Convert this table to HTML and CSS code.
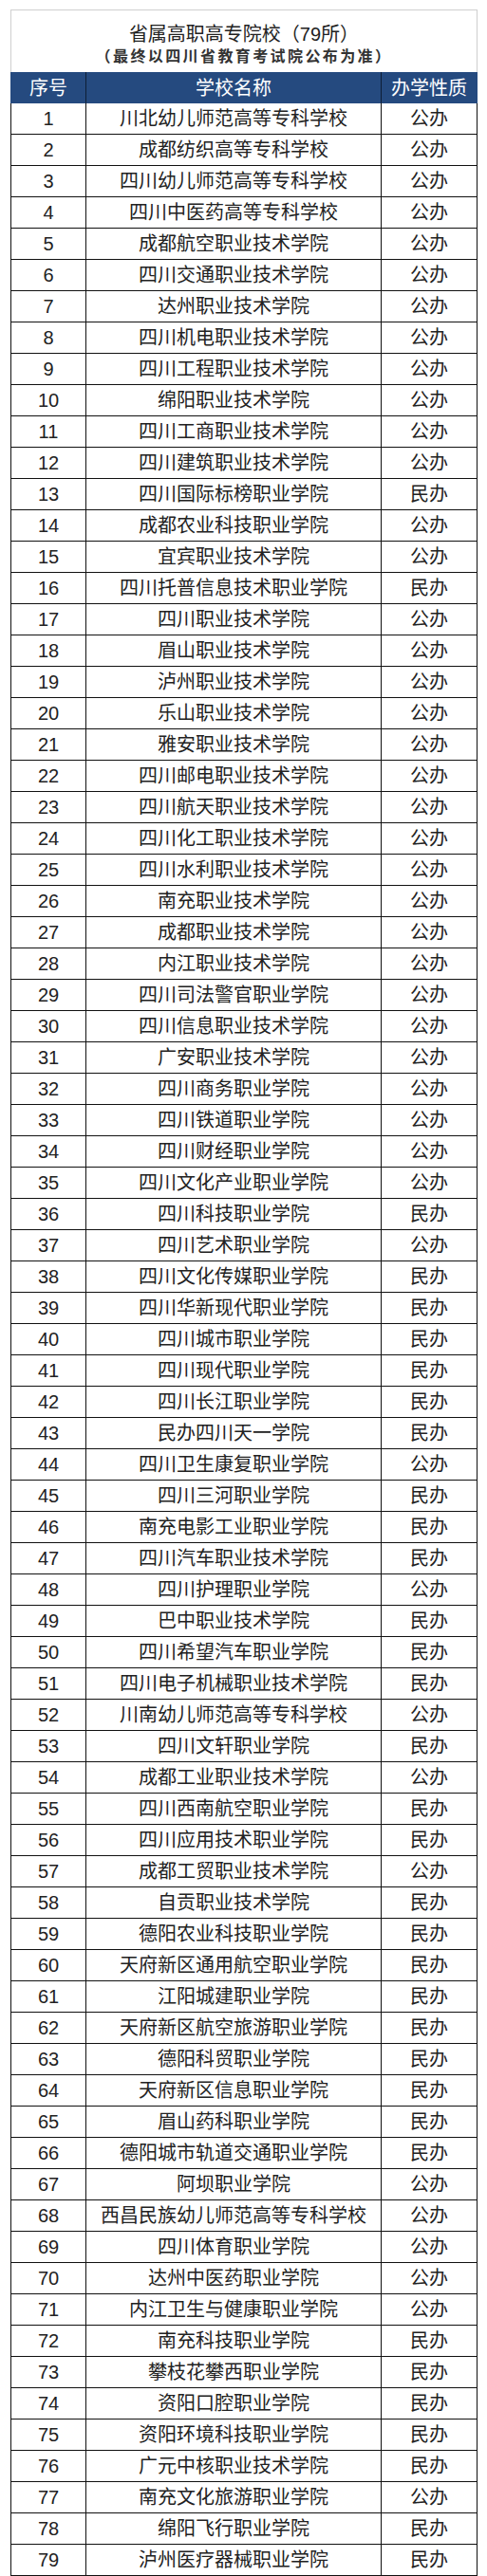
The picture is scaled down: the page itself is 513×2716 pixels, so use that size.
FILE: index.html
```html
<!DOCTYPE html>
<html lang="zh-CN">
<head>
<meta charset="utf-8">
<title>省属高职高专院校（79所）</title>
<link rel="stylesheet" href="styles.css">
</head>
<body>
<div class="sheet">
  <div class="caption">
    <div class="title">省属高职高专院校（79所）</div>
    <div class="sub">（最终以四川省教育考试院公布为准）</div>
  </div>
  <div class="row head"><div class="c no">序号</div><div class="c name">学校名称</div><div class="c kind">办学性质</div></div>
  <div class="row"><div class="c no">1</div><div class="c name">川北幼儿师范高等专科学校</div><div class="c kind">公办</div></div>
  <div class="row"><div class="c no">2</div><div class="c name">成都纺织高等专科学校</div><div class="c kind">公办</div></div>
  <div class="row"><div class="c no">3</div><div class="c name">四川幼儿师范高等专科学校</div><div class="c kind">公办</div></div>
  <div class="row"><div class="c no">4</div><div class="c name">四川中医药高等专科学校</div><div class="c kind">公办</div></div>
  <div class="row"><div class="c no">5</div><div class="c name">成都航空职业技术学院</div><div class="c kind">公办</div></div>
  <div class="row"><div class="c no">6</div><div class="c name">四川交通职业技术学院</div><div class="c kind">公办</div></div>
  <div class="row"><div class="c no">7</div><div class="c name">达州职业技术学院</div><div class="c kind">公办</div></div>
  <div class="row"><div class="c no">8</div><div class="c name">四川机电职业技术学院</div><div class="c kind">公办</div></div>
  <div class="row"><div class="c no">9</div><div class="c name">四川工程职业技术学院</div><div class="c kind">公办</div></div>
  <div class="row"><div class="c no">10</div><div class="c name">绵阳职业技术学院</div><div class="c kind">公办</div></div>
  <div class="row"><div class="c no">11</div><div class="c name">四川工商职业技术学院</div><div class="c kind">公办</div></div>
  <div class="row"><div class="c no">12</div><div class="c name">四川建筑职业技术学院</div><div class="c kind">公办</div></div>
  <div class="row"><div class="c no">13</div><div class="c name">四川国际标榜职业学院</div><div class="c kind">民办</div></div>
  <div class="row"><div class="c no">14</div><div class="c name">成都农业科技职业学院</div><div class="c kind">公办</div></div>
  <div class="row"><div class="c no">15</div><div class="c name">宜宾职业技术学院</div><div class="c kind">公办</div></div>
  <div class="row"><div class="c no">16</div><div class="c name">四川托普信息技术职业学院</div><div class="c kind">民办</div></div>
  <div class="row"><div class="c no">17</div><div class="c name">四川职业技术学院</div><div class="c kind">公办</div></div>
  <div class="row"><div class="c no">18</div><div class="c name">眉山职业技术学院</div><div class="c kind">公办</div></div>
  <div class="row"><div class="c no">19</div><div class="c name">泸州职业技术学院</div><div class="c kind">公办</div></div>
  <div class="row"><div class="c no">20</div><div class="c name">乐山职业技术学院</div><div class="c kind">公办</div></div>
  <div class="row"><div class="c no">21</div><div class="c name">雅安职业技术学院</div><div class="c kind">公办</div></div>
  <div class="row"><div class="c no">22</div><div class="c name">四川邮电职业技术学院</div><div class="c kind">公办</div></div>
  <div class="row"><div class="c no">23</div><div class="c name">四川航天职业技术学院</div><div class="c kind">公办</div></div>
  <div class="row"><div class="c no">24</div><div class="c name">四川化工职业技术学院</div><div class="c kind">公办</div></div>
  <div class="row"><div class="c no">25</div><div class="c name">四川水利职业技术学院</div><div class="c kind">公办</div></div>
  <div class="row"><div class="c no">26</div><div class="c name">南充职业技术学院</div><div class="c kind">公办</div></div>
  <div class="row"><div class="c no">27</div><div class="c name">成都职业技术学院</div><div class="c kind">公办</div></div>
  <div class="row"><div class="c no">28</div><div class="c name">内江职业技术学院</div><div class="c kind">公办</div></div>
  <div class="row"><div class="c no">29</div><div class="c name">四川司法警官职业学院</div><div class="c kind">公办</div></div>
  <div class="row"><div class="c no">30</div><div class="c name">四川信息职业技术学院</div><div class="c kind">公办</div></div>
  <div class="row"><div class="c no">31</div><div class="c name">广安职业技术学院</div><div class="c kind">公办</div></div>
  <div class="row"><div class="c no">32</div><div class="c name">四川商务职业学院</div><div class="c kind">公办</div></div>
  <div class="row"><div class="c no">33</div><div class="c name">四川铁道职业学院</div><div class="c kind">公办</div></div>
  <div class="row"><div class="c no">34</div><div class="c name">四川财经职业学院</div><div class="c kind">公办</div></div>
  <div class="row"><div class="c no">35</div><div class="c name">四川文化产业职业学院</div><div class="c kind">公办</div></div>
  <div class="row"><div class="c no">36</div><div class="c name">四川科技职业学院</div><div class="c kind">民办</div></div>
  <div class="row"><div class="c no">37</div><div class="c name">四川艺术职业学院</div><div class="c kind">公办</div></div>
  <div class="row"><div class="c no">38</div><div class="c name">四川文化传媒职业学院</div><div class="c kind">民办</div></div>
  <div class="row"><div class="c no">39</div><div class="c name">四川华新现代职业学院</div><div class="c kind">民办</div></div>
  <div class="row"><div class="c no">40</div><div class="c name">四川城市职业学院</div><div class="c kind">民办</div></div>
  <div class="row"><div class="c no">41</div><div class="c name">四川现代职业学院</div><div class="c kind">民办</div></div>
  <div class="row"><div class="c no">42</div><div class="c name">四川长江职业学院</div><div class="c kind">民办</div></div>
  <div class="row"><div class="c no">43</div><div class="c name">民办四川天一学院</div><div class="c kind">民办</div></div>
  <div class="row"><div class="c no">44</div><div class="c name">四川卫生康复职业学院</div><div class="c kind">公办</div></div>
  <div class="row"><div class="c no">45</div><div class="c name">四川三河职业学院</div><div class="c kind">民办</div></div>
  <div class="row"><div class="c no">46</div><div class="c name">南充电影工业职业学院</div><div class="c kind">民办</div></div>
  <div class="row"><div class="c no">47</div><div class="c name">四川汽车职业技术学院</div><div class="c kind">民办</div></div>
  <div class="row"><div class="c no">48</div><div class="c name">四川护理职业学院</div><div class="c kind">公办</div></div>
  <div class="row"><div class="c no">49</div><div class="c name">巴中职业技术学院</div><div class="c kind">民办</div></div>
  <div class="row"><div class="c no">50</div><div class="c name">四川希望汽车职业学院</div><div class="c kind">民办</div></div>
  <div class="row"><div class="c no">51</div><div class="c name">四川电子机械职业技术学院</div><div class="c kind">民办</div></div>
  <div class="row"><div class="c no">52</div><div class="c name">川南幼儿师范高等专科学校</div><div class="c kind">公办</div></div>
  <div class="row"><div class="c no">53</div><div class="c name">四川文轩职业学院</div><div class="c kind">民办</div></div>
  <div class="row"><div class="c no">54</div><div class="c name">成都工业职业技术学院</div><div class="c kind">公办</div></div>
  <div class="row"><div class="c no">55</div><div class="c name">四川西南航空职业学院</div><div class="c kind">民办</div></div>
  <div class="row"><div class="c no">56</div><div class="c name">四川应用技术职业学院</div><div class="c kind">民办</div></div>
  <div class="row"><div class="c no">57</div><div class="c name">成都工贸职业技术学院</div><div class="c kind">公办</div></div>
  <div class="row"><div class="c no">58</div><div class="c name">自贡职业技术学院</div><div class="c kind">民办</div></div>
  <div class="row"><div class="c no">59</div><div class="c name">德阳农业科技职业学院</div><div class="c kind">民办</div></div>
  <div class="row"><div class="c no">60</div><div class="c name">天府新区通用航空职业学院</div><div class="c kind">民办</div></div>
  <div class="row"><div class="c no">61</div><div class="c name">江阳城建职业学院</div><div class="c kind">民办</div></div>
  <div class="row"><div class="c no">62</div><div class="c name">天府新区航空旅游职业学院</div><div class="c kind">民办</div></div>
  <div class="row"><div class="c no">63</div><div class="c name">德阳科贸职业学院</div><div class="c kind">民办</div></div>
  <div class="row"><div class="c no">64</div><div class="c name">天府新区信息职业学院</div><div class="c kind">民办</div></div>
  <div class="row"><div class="c no">65</div><div class="c name">眉山药科职业学院</div><div class="c kind">民办</div></div>
  <div class="row"><div class="c no">66</div><div class="c name">德阳城市轨道交通职业学院</div><div class="c kind">民办</div></div>
  <div class="row"><div class="c no">67</div><div class="c name">阿坝职业学院</div><div class="c kind">公办</div></div>
  <div class="row"><div class="c no">68</div><div class="c name">西昌民族幼儿师范高等专科学校</div><div class="c kind">公办</div></div>
  <div class="row"><div class="c no">69</div><div class="c name">四川体育职业学院</div><div class="c kind">公办</div></div>
  <div class="row"><div class="c no">70</div><div class="c name">达州中医药职业学院</div><div class="c kind">公办</div></div>
  <div class="row"><div class="c no">71</div><div class="c name">内江卫生与健康职业学院</div><div class="c kind">公办</div></div>
  <div class="row"><div class="c no">72</div><div class="c name">南充科技职业学院</div><div class="c kind">民办</div></div>
  <div class="row"><div class="c no">73</div><div class="c name">攀枝花攀西职业学院</div><div class="c kind">民办</div></div>
  <div class="row"><div class="c no">74</div><div class="c name">资阳口腔职业学院</div><div class="c kind">民办</div></div>
  <div class="row"><div class="c no">75</div><div class="c name">资阳环境科技职业学院</div><div class="c kind">民办</div></div>
  <div class="row"><div class="c no">76</div><div class="c name">广元中核职业技术学院</div><div class="c kind">民办</div></div>
  <div class="row"><div class="c no">77</div><div class="c name">南充文化旅游职业学院</div><div class="c kind">公办</div></div>
  <div class="row"><div class="c no">78</div><div class="c name">绵阳飞行职业学院</div><div class="c kind">民办</div></div>
  <div class="row"><div class="c no">79</div><div class="c name">泸州医疗器械职业学院</div><div class="c kind">民办</div></div>
</div>
</body>
</html>
```

FILE: styles.css
```css
html, body {
  margin: 0;
  padding: 0;
  background: #ffffff;
}

body {
  font-family: "Liberation Sans", "Noto Sans CJK SC", sans-serif;
  color: #222222;
}

.sheet {
  width: 492px;
  margin: 10px 0 0 11px;
}

.caption {
  box-sizing: border-box;
  height: 66px;
  border: 1px solid #cfcfcf;
  border-bottom: none;
  display: flex;
  flex-direction: column;
  align-items: center;
  padding-top: 11px;
}

.title {
  font-size: 20px;
  line-height: 28px;
  height: 28px;
}

.sub {
  font-size: 16px;
  line-height: 20px;
  font-weight: 700;
  letter-spacing: 2.4px;
  color: #333333;
}

.row {
  box-sizing: border-box;
  height: 33px;
  display: grid;
  grid-template-columns: 79px 311px 100px;
  border-left: 1px solid #111111;
  border-right: 1px solid #111111;
  border-bottom: 1px solid #111111;
  font-size: 20px;
}

.c {
  display: flex;
  align-items: center;
  justify-content: center;
  white-space: nowrap;
  line-height: 1;
}

.c.no,
.c.name {
  border-right: 1px solid #111111;
}

.head {
  background: #254a7f;
  color: #ffffff;
  border-left-color: #254a7f;
  border-right-color: #254a7f;
  border-bottom: none;
}

.head .c.no,
.head .c.name {
  border-right-color: #0e1e36;
}
```
